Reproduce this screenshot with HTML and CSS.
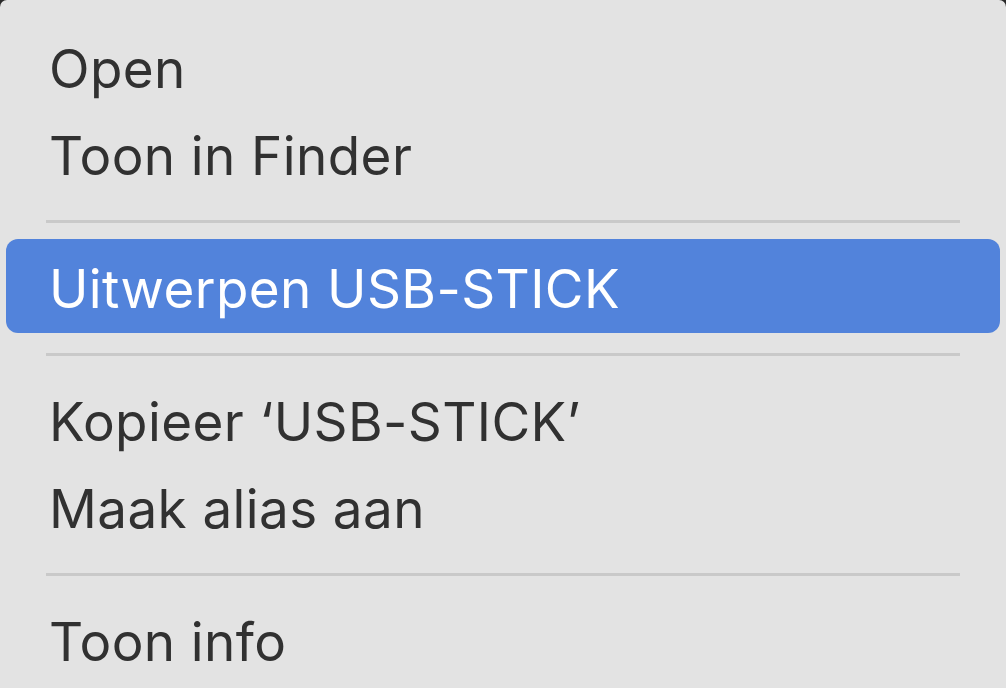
FILE: index.html
```html
<!DOCTYPE html>
<html lang="nl">
<head>
<meta charset="utf-8">
<title>Contextmenu</title>
<link rel="stylesheet" href="styles.css">
</head>
<body>
<div class="menu">
  <div class="item">Open</div>
  <div class="item">Toon in Finder</div>
  <div class="sep"></div>
  <div class="item active">Uitwerpen USB-STICK</div>
  <div class="sep"></div>
  <div class="item">Kopieer ‘USB-STICK’</div>
  <div class="item">Maak alias aan</div>
  <div class="sep"></div>
  <div class="item">Toon info</div>
</div>
</body>
</html>
```
FILE: styles.css
```css
html, body {
  margin: 0;
  padding: 0;
  background: #2a2a2a;
}
body {
  width: 1006px;
  height: 688px;
  overflow: hidden;
}
.menu {
  width: 1006px;
  height: 688px;
  box-sizing: border-box;
  background: #e3e3e3;
  border-radius: 7px 7px 0 0;
  padding: 26px 6px 0 6px;
  display: flex;
  flex-direction: column;
  font-family: Inter, "Liberation Sans", sans-serif;
  font-size: 53px;
  letter-spacing: 0.4px;
  color: #313131;
}
.item {
  height: 87px;
  line-height: 87px;
  padding-left: 43px;
  white-space: nowrap;
}
.item.active {
  margin-top: -7px;
  padding-top: 7px;
  background: #5283db;
  color: #ffffff;
  border-radius: 12px;
}
.sep {
  height: 3px;
  margin: 20px 40px 23px 40px;
  background: #c9c9c9;
  flex: none;
}
```
